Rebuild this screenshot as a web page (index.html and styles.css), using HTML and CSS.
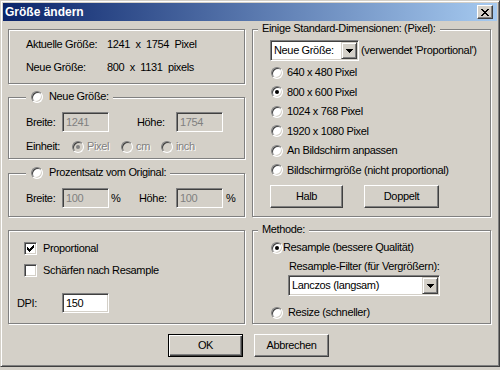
FILE: index.html
```html
<!DOCTYPE html>
<html lang="de">
<head>
  <meta charset="UTF-8">
  <title>Größe ändern</title>
  <link rel="stylesheet" href="styles.css">
</head>
<body>
<div class="window">
  <div class="titlebar">
    <span class="title">Größe ändern</span>
    <span class="close">
      <svg width="8" height="7" viewBox="0 0 8 7" shape-rendering="crispEdges"><path d="M0 0h2v1H0zM6 0h2v1H6zM1 1h2v1H1zM5 1h2v1H5zM2 2h4v1H2zM3 3h2v1H3zM2 4h4v1H2zM1 5h2v1H1zM5 5h2v1H5zM0 6h2v1H0zM6 6h2v1H6z"/></svg>
    </span>
  </div>

  <div class="content">
    <div class="col">
      <div class="group info">
        <div class="row"><span class="info-label">Aktuelle Größe:</span><span class="info-val">1241  x  1754  Pixel</span></div>
        <div class="row"><span class="info-label">Neue Größe:</span><span class="info-val">800  x  1131  pixels</span></div>
      </div>

      <div class="group size">
        <div class="legend"><span class="radio"></span>Neue Größe:</div>
        <div class="row">
          <span class="lbl w36">Breite:</span>
          <span class="field off">1241</span>
          <span class="lbl w39 ml28">Höhe:</span>
          <span class="field off">1754</span>
        </div>
        <div class="row unit">
          <span class="lbl w46">Einheit:</span>
          <span class="opt w49"><span class="radio off on"></span><span class="dis">Pixel</span></span>
          <span class="opt w40"><span class="radio off"></span><span class="dis">cm</span></span>
          <span class="opt"><span class="radio off"></span><span class="dis">inch</span></span>
        </div>
      </div>

      <div class="group percent">
        <div class="legend"><span class="radio"></span>Prozentsatz vom Original:</div>
        <div class="row">
          <span class="lbl w36">Breite:</span>
          <span class="field off">100</span>
          <span class="lbl pct">%</span>
          <span class="lbl w37">Höhe:</span>
          <span class="field off">100</span>
          <span class="lbl ml3">%</span>
        </div>
      </div>
    </div>

    <div class="group dims">
      <div class="legend plain">Einige Standard-Dimensionen: (Pixel):</div>
      <div class="row">
        <span class="combo w89"><span class="combo-text">Neue Größe:</span><span class="drop"><svg width="7" height="4" viewBox="0 0 7 4" shape-rendering="crispEdges"><path d="M0 0h7v1H0zM1 1h5v1H1zM2 2h3v1H2zM3 3h1v1H3z"/></svg></span></span>
        <span class="hint">(verwendet 'Proportional')</span>
      </div>
      <div class="radios">
        <div class="row"><span class="radio"></span>640 x 480 Pixel</div>
        <div class="row"><span class="radio on"></span>800 x 600 Pixel</div>
        <div class="row"><span class="radio"></span>1024 x 768 Pixel</div>
        <div class="row"><span class="radio"></span>1920 x 1080 Pixel</div>
        <div class="row"><span class="radio"></span>An Bildschirm anpassen</div>
        <div class="row"><span class="radio"></span>Bildschirmgröße (nicht proportional)</div>
      </div>
      <div class="row btns">
        <button class="btn">Halb</button>
        <button class="btn">Doppelt</button>
      </div>
    </div>

    <div class="group options">
      <div class="row chk"><span class="check"><svg width="7" height="7" viewBox="0 0 7 7" shape-rendering="crispEdges"><path d="M0 2h1v3H0zM1 3h1v3H1zM2 4h1v3H2zM3 3h1v3H3zM4 2h1v3H4zM5 1h1v3H5zM6 0h1v3H6z"/></svg></span>Proportional</div>
      <div class="row chk"><span class="check"></span>Schärfen nach Resample</div>
      <div class="row dpi">
        <span class="lbl w45">DPI:</span>
        <span class="field">150</span>
      </div>
    </div>

    <div class="group method">
      <div class="legend plain">Methode:</div>
      <div class="row"><span class="radio on"></span>Resample (bessere Qualität)</div>
      <div class="filter-label">Resample-Filter (für Vergrößern):</div>
      <span class="combo w152"><span class="combo-text">Lanczos (langsam)</span><span class="drop"><svg width="7" height="4" viewBox="0 0 7 4" shape-rendering="crispEdges"><path d="M0 0h7v1H0zM1 1h5v1H1zM2 2h3v1H2zM3 3h1v1H3z"/></svg></span></span>
      <div class="row resize"><span class="radio"></span>Resize (schneller)</div>
    </div>
  </div>

  <div class="actions">
    <button class="btn default">OK</button>
    <button class="btn">Abbrechen</button>
  </div>
</div>
</body>
</html>
```

FILE: styles.css
```css
* {
  box-sizing: border-box;
}
body {
  margin: 0;
  background: #d4d0c8;
  font-family: "Liberation Sans", Arial, sans-serif;
  font-size: 11px;
  line-height: 13px;
  letter-spacing: -0.35px;
  color: #000;
}
.window {
  width: 500px;
  height: 367px;
  padding: 2px;
  background: #d4d0c8;
  border: 1px solid;
  border-color: #d4d0c8 #404040 #404040 #d4d0c8;
  box-shadow: inset 1px 1px #fff, inset -1px -1px #808080;
}
.titlebar {
  height: 18px;
  display: flex;
  align-items: center;
  justify-content: space-between;
  padding: 0 4px 0 2px;
  background: linear-gradient(to right, #0a246a, #a6caf0);
}
.title {
  color: #fff;
  font-size: 12px;
  font-weight: bold;
  letter-spacing: 0;
}
.close {
  width: 16px;
  height: 14px;
  display: flex;
  align-items: center;
  justify-content: center;
  background: #d4d0c8;
  border: 1px solid;
  border-color: #fff #404040 #404040 #fff;
  box-shadow: inset -1px -1px #808080;
}

.content {
  display: grid;
  grid-template-columns: 237px 239px;
  grid-template-rows: 188px 94px;
  column-gap: 7px;
  row-gap: 13px;
  padding: 8px 0 0 5px;
}
.col {
  display: flex;
  flex-direction: column;
}
.group {
  position: relative;
  border: 1px solid #808080;
  box-shadow: inset 1px 1px #fff, 1px 1px #fff;
}
.legend {
  position: absolute;
  top: -8px;
  left: 17px;
  display: flex;
  align-items: center;
  gap: 6px;
  padding: 0 4px 0 5px;
  background: #d4d0c8;
}
.legend.plain {
  left: 5px;
  padding: 0 4px;
}
.row {
  display: flex;
  align-items: center;
}

/* left column */
.info {
  height: 55px;
  padding: 8px 0 0 17px;
  display: flex;
  flex-direction: column;
  gap: 10px;
}
.info-label {
  width: 81px;
}
.info-val {
  white-space: pre;
}
.size {
  height: 62px;
  margin-top: 13px;
  padding: 14px 0 0 17px;
}
.percent {
  height: 44px;
  margin-top: 14px;
  padding: 14px 0 0 17px;
}
.unit {
  margin-top: 8px;
}
.w36 { width: 36px; }
.w37 { width: 37px; }
.w39 { width: 39px; }
.w40 { width: 40px; }
.w45 { width: 45px; }
.w46 { width: 46px; }
.w49 { width: 49px; }
.ml28 { margin-left: 28px; }
.ml3 { margin-left: 3px; }
.pct {
  width: 28px;
  margin-left: 2px;
}
.opt {
  display: flex;
  align-items: center;
  gap: 3px;
}
.dis {
  color: #808080;
  text-shadow: 1px 1px #fff;
}

.field {
  width: 47px;
  height: 20px;
  display: flex;
  align-items: center;
  padding-left: 3px;
  background: #fff;
  border: 1px solid;
  border-color: #808080 #fff #fff #808080;
  box-shadow: inset 1px 1px #404040, inset -1px -1px #d4d0c8;
}
.field.off {
  background: #d4d0c8;
  color: #808080;
}

.radio {
  position: relative;
  flex: none;
  width: 12px;
  height: 12px;
  border-radius: 50%;
  background: #fff;
  border: 1px solid;
  border-color: #808080 #fff #fff #808080;
  box-shadow: inset 1px 1px #404040, inset -1px -1px #d4d0c8;
}
.radio.off {
  background: #d4d0c8;
}
.radio.on::after {
  content: "";
  position: absolute;
  left: 3px;
  top: 3px;
  width: 4px;
  height: 4px;
  border-radius: 50%;
  background: #000;
}
.radio.off.on::after {
  background: #808080;
}

.check {
  flex: none;
  width: 13px;
  height: 13px;
  display: flex;
  align-items: center;
  justify-content: center;
  background: #fff;
  border: 1px solid;
  border-color: #808080 #fff #fff #808080;
  box-shadow: inset 1px 1px #404040, inset -1px -1px #d4d0c8;
}

.combo {
  height: 21px;
  display: flex;
  align-items: center;
  padding: 1px;
  background: #fff;
  border: 1px solid;
  border-color: #808080 #fff #fff #808080;
  box-shadow: inset 1px 1px #404040, inset -1px -1px #d4d0c8;
}
.combo-text {
  flex: 1;
  padding-left: 2px;
}
.drop {
  width: 16px;
  height: 17px;
  display: flex;
  align-items: center;
  justify-content: center;
  background: #d4d0c8;
  border: 1px solid;
  border-color: #d4d0c8 #404040 #404040 #d4d0c8;
  box-shadow: inset 1px 1px #fff, inset -1px -1px #808080;
}
.w89 { width: 89px; }
.w152 { width: 152px; }

/* right column */
.dims {
  padding: 10px 0 0 17px;
}
.hint {
  margin-left: 2px;
}
.radios {
  display: flex;
  flex-direction: column;
  gap: 6.6px;
  margin: 5px 0 0 1px;
}
.radios .row {
  gap: 4px;
}
.btns {
  margin-top: 8px;
  gap: 21px;
}
.btns .btn:first-child {
  width: 73px;
}

.options {
  padding: 11px 0 0 15px;
}
.chk {
  gap: 6px;
}
.chk + .chk {
  margin-top: 9px;
}
.dpi {
  margin: 16px 0 0 -7px;
}

.method {
  padding: 10px 0 0 18px;
}
.method > .row:first-of-type {
  gap: 5px;
}
.filter-label {
  margin: 6px 0 0 18px;
}
.method .combo {
  margin: 2px 0 0 17px;
}
.resize {
  gap: 5px;
  margin-top: 10px;
}

.btn {
  width: 75px;
  height: 23px;
  padding: 0;
  font: inherit;
  letter-spacing: inherit;
  color: #000;
  background: #d4d0c8;
  border: 1px solid;
  border-color: #fff #404040 #404040 #fff;
  box-shadow: inset -1px -1px #808080;
}
.btn.default {
  border-color: #000;
  box-shadow: inset 1px 1px #fff, inset -1px -1px #404040, inset -2px -2px #808080;
}
.actions {
  display: flex;
  gap: 11px;
  padding: 10px 0 0 165px;
}
```
